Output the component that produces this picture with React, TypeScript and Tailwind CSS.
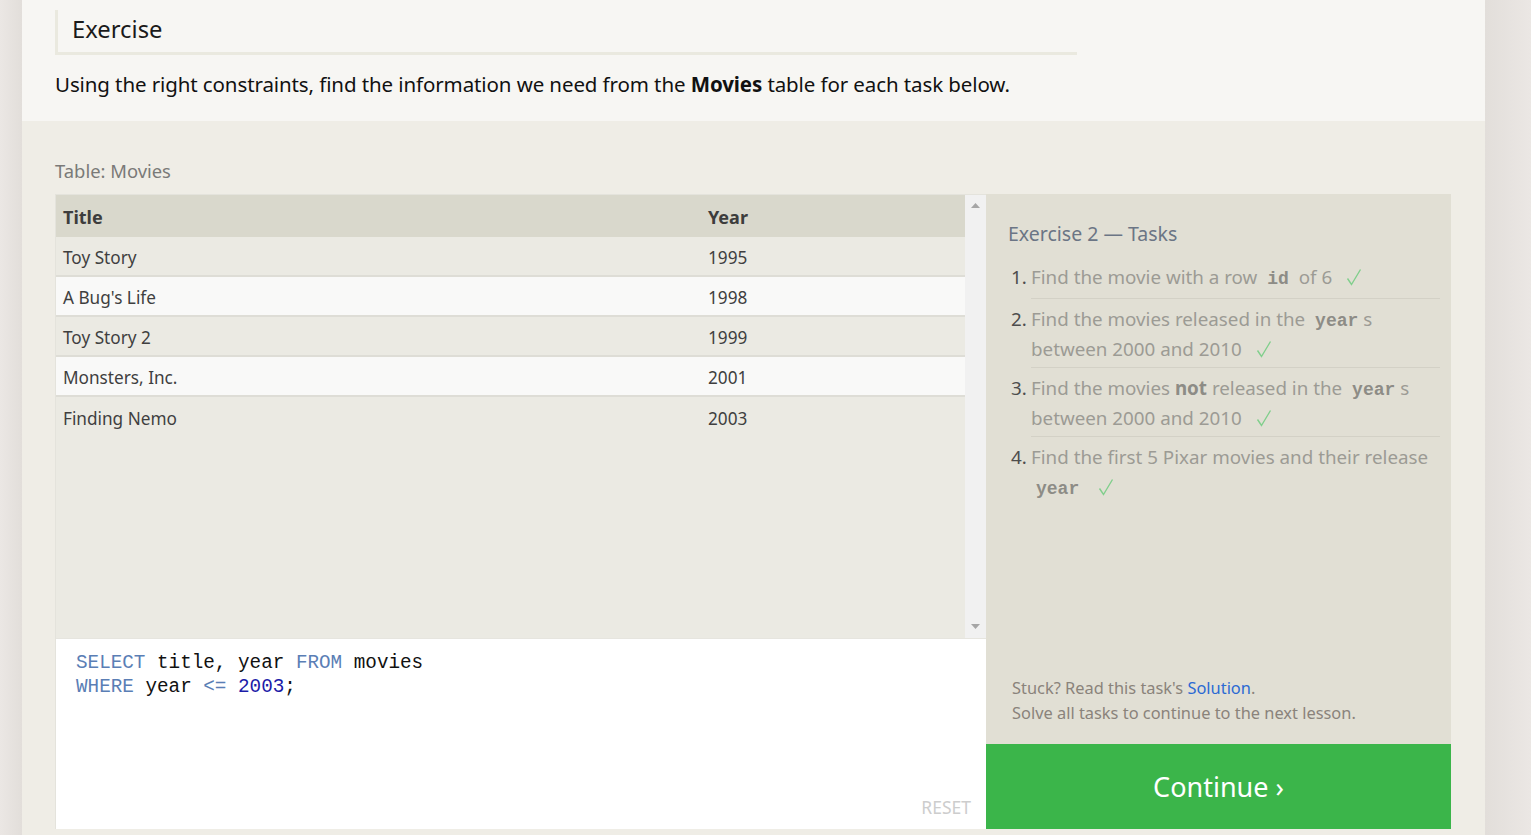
const sans = { fontFamily: '"Noto Sans", "Open Sans", sans-serif' };

const movies = [
  { title: "Toy Story", year: 1995 },
  { title: "A Bug's Life", year: 1998 },
  { title: "Toy Story 2", year: 1999 },
  { title: "Monsters, Inc.", year: 2001 },
  { title: "Finding Nemo", year: 2003 },
];

function Code({ children }: { children: string }) {
  return (
    <code className="px-[5px] font-bold leading-none text-[#8d8c86] font-['Liberation_Mono',monospace] text-[18px]">
      {children}
    </code>
  );
}

function Check() {
  return (
    <svg
      className="ml-[14px] inline-block align-[-2px]"
      width="16"
      height="18"
      viewBox="0 0 16 18"
      fill="none"
    >
      <path d="M1.5 10.5 L5.5 16.5 L14.5 1.5" stroke="#80cf8c" strokeWidth="1.4" />
    </svg>
  );
}

export default function App() {
  return (
    <div className="flex min-h-screen w-full bg-[#ebe7e4]" style={sans}>
      <div className="w-[22px] shrink-0 bg-gradient-to-r from-[#ebe7e4] to-[#e2deda]" />

      <main className="w-[1463px] shrink-0">
        {/* intro */}
        <section className="h-[121px] bg-[#f7f6f3] px-[33px] pt-[10px]">
          <div className="flex h-[45px] w-[1022px] items-center border-b-[3px] border-l-[3px] border-[#eae9df] pb-[2px] pl-[14px]">
            <h2 className="text-[23.8px] text-[#1a1a1a]">Exercise</h2>
          </div>
          <p className="mt-[14px] text-[20.5px] tracking-[-0.1px] text-[#111]">
            Using the right constraints, find the information we need from the{" "}
            <b>Movies</b> table for each task below.
          </p>
        </section>

        {/* exercise */}
        <section className="bg-[#efede6] px-[33px] pb-[7px] pt-[36px]">
          <p className="mb-[9px] text-[18.4px] text-[#7a7a78]">Table: Movies</p>

          <div className="flex h-[635px]">
            {/* left: table + editor */}
            <div className="flex w-[931px] flex-col border-l border-t border-[#e4e3dc]">
              <div className="flex h-[443px]">
                <div className="flex-1 bg-[#ebeae3]">
                  <div className="flex h-[42px] items-center bg-[#d9d8cc] px-[7px] pt-[3px] text-[18px] font-bold text-[#3d3d3d]">
                    <span className="w-[645px]">Title</span>
                    <span>Year</span>
                  </div>
                  {movies.map((m, i) => (
                    <div
                      key={m.title}
                      className={`flex h-[40px] items-center px-[7px] pt-[4px] text-[17.2px] text-[#3f3f3f] ${
                        i % 2 === 1 ? "bg-[#f9f9f8]" : "bg-[#ebeae3]"
                      } ${i === movies.length - 1 ? "" : "border-b-2 border-[#deddd6]"}`}
                    >
                      <span className="w-[645px]">{m.title}</span>
                      <span>{m.year}</span>
                    </div>
                  ))}
                </div>
                <div className="flex w-[21px] flex-col items-center justify-between bg-[#f1f1f1] pb-[9px] pt-[8px]">
                  <svg width="9" height="5" viewBox="0 0 9 5">
                    <path d="M0 5 L4.5 0 L9 5 Z" fill="#a6a6a6" />
                  </svg>
                  <svg width="9" height="5" viewBox="0 0 9 5">
                    <path d="M0 0 L4.5 5 L9 0 Z" fill="#a6a6a6" />
                  </svg>
                </div>
              </div>

              <div className="relative flex-1 border-t border-[#e6e5df] bg-white px-[20px] pt-[12px] font-['Liberation_Mono',monospace] text-[19.3px] leading-[24px] text-[#111]">
                <div>
                  <span className="text-[#5a7eb5]">SELECT</span> title, year{" "}
                  <span className="text-[#5a7eb5]">FROM</span> movies
                </div>
                <div>
                  <span className="text-[#5a7eb5]">WHERE</span> year{" "}
                  <span className="text-[#5a7eb5]">&lt;=</span>{" "}
                  <span className="text-[#1c1ca8]">2003</span>;
                </div>
                <span
                  className="absolute bottom-[10px] right-[15px] text-[17.5px] text-[#cdcdcd]"
                  style={sans}
                >
                  RESET
                </span>
              </div>
            </div>

            {/* right: tasks */}
            <div className="flex w-[465px] flex-col">
              <div className="flex flex-1 flex-col justify-between bg-[#e1dfd4] pb-[19px] pl-[22px] pr-[11px] pt-[26px]">
                <div>
                  <h3 className="text-[19.5px] leading-[28px] text-[#6b7585]">
                    Exercise 2 — Tasks
                  </h3>
                  <ol className="mt-[14px] text-[18.8px] leading-[30px] text-[#9c9b94]">
                    <li className="flex">
                      <span className="w-[23px] shrink-0 pl-[3px] text-[#4d4d4d]">1.</span>
                      <span className="flex-1 border-b border-[#d3d1c6] pb-[6px]">
                        Find the movie with a row <Code>id</Code> of 6<Check />
                      </span>
                    </li>
                    <li className="flex">
                      <span className="w-[23px] shrink-0 pl-[3px] pt-[5px] text-[#4d4d4d]">2.</span>
                      <span className="flex-1 border-b border-[#d3d1c6] pb-[3px] pt-[5px]">
                        Find the movies released in the <Code>year</Code>s between 2000 and 2010
                        <Check />
                      </span>
                    </li>
                    <li className="flex">
                      <span className="w-[23px] shrink-0 pl-[3px] pt-[5px] text-[#4d4d4d]">3.</span>
                      <span className="flex-1 border-b border-[#d3d1c6] pb-[3px] pt-[5px]">
                        Find the movies <b className="text-[#8d8c86]">not</b> released in the{" "}
                        <Code>year</Code>s between 2000 and 2010
                        <Check />
                      </span>
                    </li>
                    <li className="flex">
                      <span className="w-[23px] shrink-0 pl-[3px] pt-[5px] text-[#4d4d4d]">4.</span>
                      <span className="flex-1 pt-[5px]">
                        Find the first 5 Pixar movies and their release <Code>year</Code>
                        <Check />
                      </span>
                    </li>
                  </ol>
                </div>
                <div className="pl-[4px] text-[16.4px] leading-[25px] text-[#8a837b]">
                  <p>
                    Stuck? Read this task's <span className="text-[#2b6ad3]">Solution</span>.
                  </p>
                  <p>Solve all tasks to continue to the next lesson.</p>
                </div>
              </div>
              <button className="flex h-[85px] items-center justify-center bg-[#3bb54a] pt-[2px] text-[27px] text-white">
                Continue ›
              </button>
            </div>
          </div>
        </section>
      </main>

      <div className="flex-1 bg-gradient-to-r from-[#e2deda] to-[#ebe7e4]" />
    </div>
  );
}
